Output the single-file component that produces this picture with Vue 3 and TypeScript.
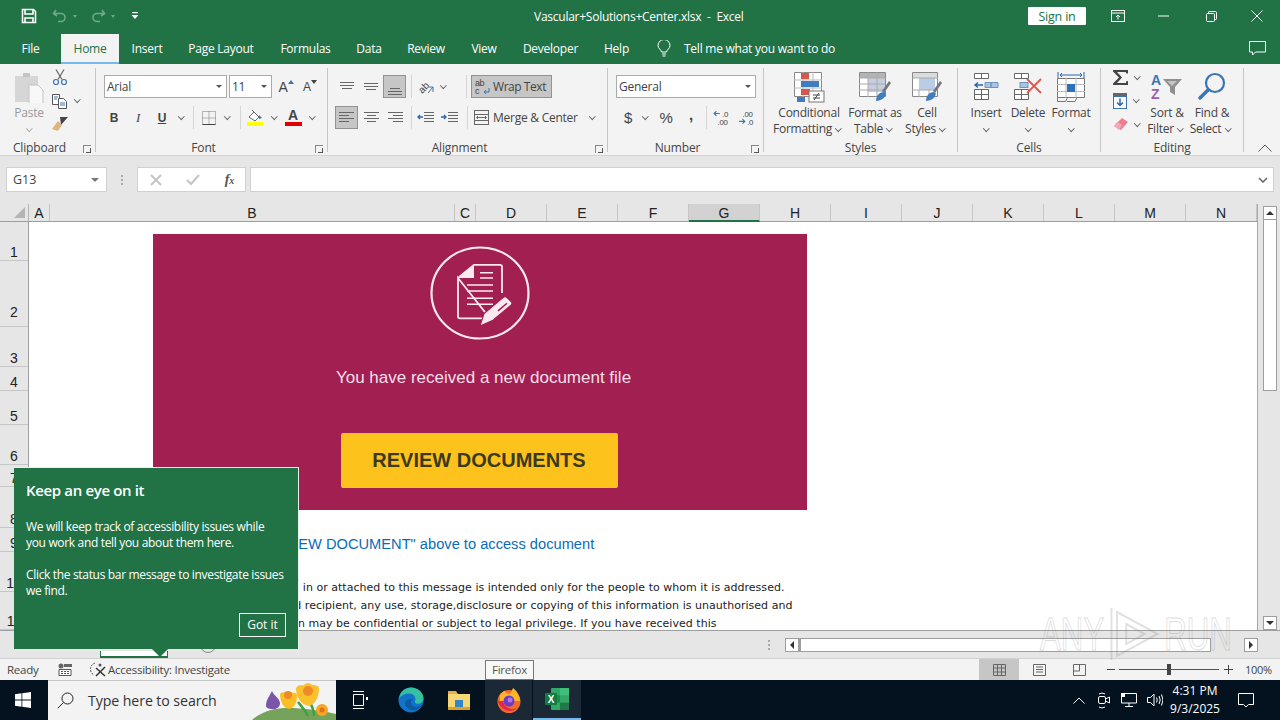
<script setup lang="ts">
const tabs = ['File', 'Home', 'Insert', 'Page Layout', 'Formulas', 'Data', 'Review', 'View', 'Developer', 'Help']
const columns = ['A', 'B', 'C', 'D', 'E', 'F', 'G', 'H', 'I', 'J', 'K', 'L', 'M', 'N']
const rows = ['1', '2', '3', '4', '5', '6', '7', '8', '9', '10', '11']
</script>

<template>
  <div class="excel">
    <header class="titlebar">
      <div class="quick">
        <svg class="q-save" width="16" height="16" viewBox="0 0 16 16" fill="none" stroke="#fff" stroke-width="1.6"><path d="M1.5 1.5h11l2 2v11h-13z"/><path d="M4 2v4h8V2M4 14.5V10h8v4.5"/></svg>
        <svg class="q-undo" width="16" height="14" viewBox="0 0 16 14" fill="none" stroke="#6fa98a" stroke-width="1.6"><path d="M4 1 1.5 4.5 5 7M2 4.5h7a4 4 0 0 1 0 8H6"/></svg>
        <span class="q-caret"></span>
        <svg class="q-redo" width="16" height="14" viewBox="0 0 16 14" fill="none" stroke="#6fa98a" stroke-width="1.6"><path d="M12 1l2.500 3.500L11 7M14 4.500H7a4 4 0 0 0 0 8h3"/></svg>
        <span class="q-caret"></span>
        <svg class="q-custom" width="8" height="8" viewBox="0 0 8 8" fill="#fff"><rect x="1" y="0" width="6" height="1.200"/><path d="M0.500 3h7L4 7z"/></svg>
      </div>
      <div class="doc-title">Vascular+Solutions+Center.xlsx&nbsp; -&nbsp; Excel</div>
      <button class="signin">Sign in</button>
      <svg class="win display" width="14" height="12" viewBox="0 0 14 12" fill="none" stroke="#fff"><rect x=".5" y=".5" width="13" height="11"/><path d="M.5 3h13M7 9.500V5M5 7l2-2 2 2"/></svg>
      <svg class="win min" width="11" height="2" viewBox="0 0 11 2" stroke="#fff"><path d="M0 1h11"/></svg>
      <svg class="win restore" width="11" height="11" viewBox="0 0 11 11" fill="none" stroke="#fff"><rect x=".5" y="2.500" width="8" height="8" rx="1"/><path d="M2.500 2.500V1.200q0-.7.700-.7h6.100q1.200 0 1.200 1.200v6.100q0 .7-.7.7H8.500"/></svg>
      <svg class="win close" width="12" height="12" viewBox="0 0 12 12" stroke="#fff"><path d="M.5.500l11 11M11.500.500l-11 11"/></svg>
    </header>

    <nav class="tabbar">
      <div v-for="t in tabs" :key="t" class="tab" :class="{ active: t === 'Home' }">{{ t }}</div>
      <svg class="bulb" width="14" height="17" viewBox="0 0 14 17" fill="none" stroke="#fff"><path d="M4.500 12c0-2-3.500-3.500-3.500-6.500a6 6 0 0 1 12 0C13 8.500 9.500 10 9.500 12zM5 14h4M5.500 16h3"/></svg>
      <div class="tellme">Tell me what you want to do</div>
      <svg class="comment" width="17" height="15" viewBox="0 0 17 15" fill="none" stroke="#fff"><path d="M.5.500h16v10.500H6.500l-3 3v-3h-3z"/></svg>
    </nav>

    <section class="ribbon">
      <!-- clipboard -->
      <div class="group g-clip">
        <div class="body clip-body">
          <div class="paste">
            <svg width="30" height="32" viewBox="0 0 30 32"><rect x="1" y="5" width="23" height="26" fill="#d6d6d6"/><path d="M9 2h7v4H9z" fill="#c4c4c4"/><path d="M15 14h9l5 5v14H15z" fill="#f8f8f8" stroke="#c4c4c4"/></svg>
            <span class="paste-label">Paste</span>
            <span class="caret pale"></span>
          </div>
          <div class="clip-tools">
            <div class="small">
              <svg width="16" height="17" viewBox="0 0 16 17" fill="none" stroke="#555" stroke-width="1.200"><path d="M4 .5l6 10M12 .5l-6 10" stroke="#666"/><circle cx="4" cy="13" r="2.500" stroke="#3c74b3"/><circle cx="12" cy="13" r="2.500" stroke="#3c74b3"/></svg>
            </div>
            <div class="small">
              <svg width="16" height="16" viewBox="0 0 16 16" fill="#fff" stroke="#555"><path d="M.5 1.500h7v10h-7z"/><path d="M6.500 5.500h5l3 3v7h-8z"/><path d="M2 4h4M2 6h3M8 10h5M8 12h5" stroke="#3c74b3"/></svg>
              <span class="caret"></span>
            </div>
            <div class="small">
              <svg width="17" height="15" viewBox="0 0 17 15"><path d="M9 0l8 0-7 8z" fill="#444" transform="translate(-1 0)"/><path d="M6 4l4 4-4 6-6-2z" fill="#dcb67a"/></svg>
            </div>
          </div>
        </div>
        <div class="label"><span>Clipboard</span><i class="launcher"></i></div>
      </div>

      <!-- font -->
      <div class="group g-font">
        <div class="body stack">
          <div class="row">
            <div class="select font-name">Arial<span class="caret dark"></span></div>
            <div class="select font-size">11<span class="caret dark"></span></div>
            <div class="ico grow"><span class="a-big">A</span><svg width="6" height="4" viewBox="0 0 6 4" fill="#3c74b3"><path d="M0 4l3-4 3 4z"/></svg></div>
            <div class="ico shrink"><span class="a-small">A</span><svg width="6" height="4" viewBox="0 0 6 4" fill="#444"><path d="M0 0l3 4 3-4z"/></svg></div>
          </div>
          <div class="row r2 font-row2">
            <div class="ico fmt b">B</div>
            <div class="ico fmt i">I</div>
            <div class="ico fmt u">U</div>
            <span class="caret"></span>
            <i class="vsep"></i>
            <div class="ico"><svg width="14" height="14" viewBox="0 0 14 14" fill="none" stroke="#777" stroke-dasharray="1 1"><path d="M.5.500h13v13H.5zM7 .5v13M.5 7h13"/><path d="M.5 13.500h13" stroke-dasharray="none" stroke="#444"/></svg></div>
            <span class="caret"></span>
            <i class="vsep"></i>
            <div class="ico">
              <svg width="18" height="17" viewBox="0 0 18 17"><path d="M3 8l5-5 5 5-4 4z" fill="#fff" stroke="#666"/><path d="M6 1l2 2" stroke="#666"/><path d="M13 6l3 3-3 1z" fill="#3c74b3"/><rect x="1" y="13" width="16" height="4" fill="#ffff00"/></svg>
            </div>
            <span class="caret"></span>
            <div class="ico font-color">
              <span>A</span>
            </div>
            <span class="caret"></span>
          </div>
        </div>
        <div class="label"><span>Font</span><i class="launcher"></i></div>
      </div>

      <!-- alignment -->
      <div class="group g-align">
        <div class="body stack">
          <div class="row">
            <div class="ico al"><svg width="14" height="10" viewBox="0 0 14 10" stroke="#666"><path d="M0 .5h14M0 3.500h14M2 6.500h10"/></svg></div>
            <div class="ico al"><svg width="14" height="10" viewBox="0 0 14 10" stroke="#666"><path d="M0 1.500h14M0 4.500h14M2 7.500h10"/></svg></div>
            <div class="ico al on"><svg class="to-bottom" width="14" height="10" viewBox="0 0 14 10" stroke="#666"><path d="M2 3.500h10M0 6.500h14M0 9.500h14"/></svg></div>
            <i class="vsep s1"></i>
            <div class="ico orient"><svg width="20" height="18" viewBox="0 0 20 18"><text x="8" y="13" transform="rotate(-45 8 10)" text-anchor="middle" font-family="Liberation Sans" font-size="10" fill="#444">ab</text><path d="M12 15l5-6" stroke="#666" fill="none"/><path d="M17 14l0-5-4 0" stroke="#3c74b3" fill="none"/></svg></div>
            <span class="caret"></span>
            <i class="vsep s2"></i>
            <div class="wrap-btn">
              <svg width="16" height="16" viewBox="0 0 16 16"><text x="0" y="7" font-family="Liberation Sans" font-size="9" fill="#444">ab</text><text x="0" y="15" font-family="Liberation Sans" font-size="9" fill="#444">c</text><path d="M14 9v4H9M11 11l-2 2 2 2" fill="none" stroke="#3c74b3"/></svg>
              <span>Wrap Text</span>
            </div>
          </div>
          <div class="row r2">
            <div class="ico al on"><svg width="15" height="11" viewBox="0 0 15 11" stroke="#666"><path d="M0 .5h15M0 3.500h10M0 6.500h15M0 9.500h10"/></svg></div>
            <div class="ico al"><svg width="15" height="11" viewBox="0 0 15 11" stroke="#666"><path d="M0 .5h15M3 3.500h9M0 6.500h15M3 9.500h9"/></svg></div>
            <div class="ico al"><svg width="15" height="11" viewBox="0 0 15 11" stroke="#666"><path d="M0 .5h15M5 3.500h10M0 6.500h15M5 9.500h10"/></svg></div>
            <i class="vsep s1"></i>
            <div class="ico ind"><svg width="17" height="11" viewBox="0 0 17 11" fill="none"><path d="M7 .5h10M7 3.500h10M7 6.500h10M7 9.500h10" stroke="#666"/><path d="M6 5H1M3 3L1 5l2 2" stroke="#2a66b0" stroke-width="1.300"/></svg></div>
            <div class="ico ind2"><svg width="17" height="11" viewBox="0 0 17 11" fill="none"><path d="M7 .5h10M7 3.500h10M7 6.500h10M7 9.500h10" stroke="#666"/><path d="M0 5h5M3 3l2 2-2 2" stroke="#2a66b0" stroke-width="1.300"/></svg></div>
            <i class="vsep s3"></i>
            <div class="merge">
              <svg width="15" height="15" viewBox="0 0 15 15" fill="none" stroke="#666"><rect x=".5" y=".5" width="14" height="14"/><path d="M.5 4.500h14M.5 10.500h14"/><path d="M2.500 7.500h10M4 6l-1.500 1.500L4 9M11 6l1.500 1.500L11 9" stroke="#3c74b3"/></svg>
              <span>Merge &amp; Center</span>
              <span class="caret"></span>
            </div>
          </div>
        </div>
        <div class="label"><span>Alignment</span><i class="launcher"></i></div>
      </div>

      <!-- number -->
      <div class="group g-num">
        <div class="body stack">
          <div class="row">
            <div class="select num-format">General<span class="caret dark"></span></div>
          </div>
          <div class="row r2 num-row2">
            <div class="ico sym">$</div>
            <span class="caret"></span>
            <div class="ico sym pct">%</div>
            <div class="ico sym comma">,</div>
            <i class="vsep"></i>
            <div class="ico dec"><svg width="18" height="16" viewBox="0 0 16 14"><path d="M6 3H1M3 1L1 3l2 2" fill="none" stroke="#3c74b3"/><text x="8" y="6" font-family="Liberation Sans" font-size="7" fill="#444">.0</text><text x="4" y="13" font-family="Liberation Sans" font-size="7" fill="#444">.00</text></svg></div>
            <div class="ico dec"><svg width="18" height="16" viewBox="0 0 16 14"><text x="4" y="6" font-family="Liberation Sans" font-size="7" fill="#444">.00</text><path d="M1 10h5M4 8l2 2-2 2" fill="none" stroke="#3c74b3"/><text x="8" y="13" font-family="Liberation Sans" font-size="7" fill="#444">.0</text></svg></div>
          </div>
        </div>
        <div class="label"><span>Number</span><i class="launcher"></i></div>
      </div>

      <!-- styles -->
      <div class="group g-styles">
        <div class="body bigs">
          <div class="big w78">
            <svg width="32" height="32" viewBox="0 0 32 32"><path d="M1.500 1.500h27v24h-27z" fill="#fff" stroke="#888"/><path d="M1 9h28M1 17h28M10 1v25M20 1v25" stroke="#bbb"/><rect x="8" y="2" width="8" height="6" fill="#d9574a"/><rect x="8" y="10" width="18" height="6" fill="#3f7cc0"/><rect x="8" y="18" width="9" height="6" fill="#d9574a"/><rect x="4" y="26" width="8" height="5" fill="#3f7cc0"/><rect x="16" y="20" width="15" height="11" fill="#fff" stroke="#777"/><path d="M20 24h7M20 27h7M26 22l-5 7" stroke="#444" fill="none"/></svg>
            <span>Conditional</span>
            <span class="line2">Formatting<i class="caret tight"></i></span>
          </div>
          <div class="big w54">
            <svg width="34" height="32" viewBox="0 0 34 32"><path d="M1.500 1.500h26v24h-26z" fill="#fff" stroke="#888"/><rect x="2" y="2" width="25" height="5" fill="#b4b4b4"/><rect x="10" y="7" width="17" height="14" fill="#c4cede"/><path d="M1 7h27M1 13h27M1 19h27M10 1v25M19 1v25" stroke="#aaa"/><path d="M24 20l7-10 2 2-7 10z" fill="#777"/><path d="M18 30c0-6 4-9 8-9s1 9-8 9z" fill="#3f7cc0"/></svg>
            <span>Format as</span>
            <span class="line2">Table<i class="caret tight"></i></span>
          </div>
          <div class="big w50">
            <svg width="32" height="32" viewBox="0 0 32 32"><path d="M1.500 1.500h25v24h-25z" fill="#fff" stroke="#888"/><rect x="2" y="2" width="24" height="5" fill="#dcdcdc"/><rect x="8" y="7" width="16" height="12" fill="#b9cde6"/><path d="M1 7h26M1 19h26M8 19v7M18 19v7" stroke="#aaa"/><path d="M22 20l7-10 2 2-7 10z" fill="#777"/><path d="M15 30c0-6 4-9 8-9s1 9-8 9z" fill="#3f7cc0"/></svg>
            <span>Cell</span>
            <span class="line2">Styles<i class="caret tight"></i></span>
          </div>
        </div>
        <div class="label"><span>Styles</span></div>
      </div>

      <!-- cells -->
      <div class="group g-cells">
        <div class="body bigs">
          <div class="big w42">
            <svg width="28" height="30" viewBox="0 0 28 30" fill="#fff" stroke="#666"><path d="M2.500 1.500h14v5h-14zM9.500 1.500v5M2.500 17.500h14v10h-14zM2.500 22.500h14M9.500 17.500v10"/><path d="M13 10.500h6v5h-6zM19 10.500h7v5h-7z" fill="#a9c4e2" stroke="#7193bb"/><path d="M11 13H3M6 10.500 3 13l3 2.500" fill="none" stroke="#2a66b0" stroke-width="1.400"/></svg>
            <span>Insert</span>
            <span class="caret solo"></span>
          </div>
          <div class="big w42">
            <svg width="32" height="30" viewBox="0 0 32 30" fill="#fff" stroke="#666"><path d="M2.500 1.500h14v5h-14zM9.500 1.500v5M2.500 17.500h14v10h-14zM2.500 22.500h14M9.500 17.500v10"/><rect x="8" y="10.500" width="8" height="5" fill="#a9c4e2" stroke="#7193bb"/><path d="M15 7l14 14M29 7L15 21" stroke="#e2574c" stroke-width="1.800"/></svg>
            <span>Delete</span>
            <span class="caret solo"></span>
          </div>
          <div class="big w44">
            <svg width="30" height="32" viewBox="0 0 30 32" fill="none" stroke="#777"><path d="M2 1v6M28 1v6M4 4h22M4 4l2-2M4 4l2 2M26 4l-2-2M26 4l-2 2" stroke="#2a66b0"/><path d="M1.500 7.500h27v19h-27z" fill="#fff"/><path d="M1 13.500h28M1 20.500h28M10 7v20M20 7v20" stroke="#bbb"/><rect x="11" y="13" width="8" height="8" fill="#2f6fb7" stroke="none"/><path d="M1.500 26.500v4h8l2-4M11 30.500h8l2-4"/></svg>
            <span>Format</span>
            <span class="caret solo"></span>
          </div>
        </div>
        <div class="label"><span>Cells</span></div>
      </div>

      <!-- editing -->
      <div class="group g-edit">
        <div class="body bigs">
          <div class="edit-tools">
            <div class="small">
              <svg width="15" height="15" viewBox="0 0 15 15"><path d="M0 0h15v3.500h-1.500L12.500 2H4l5 5.500L4 13h9l.5-2H15v4H0v-1.500L6 7.500 0 1.500z" fill="#444"/></svg>
              <span class="caret"></span>
            </div>
            <div class="small">
              <svg width="14" height="16" viewBox="0 0 14 16"><rect width="14" height="3.500" fill="#666"/><rect x=".5" y="3.500" width="13" height="12" fill="#fff" stroke="#3c74b3"/><path d="M7 5.500v7M4 9.500l3 3 3-3" fill="none" stroke="#2a66b0" stroke-width="1.500"/></svg>
              <span class="caret"></span>
            </div>
            <div class="small">
              <svg width="15" height="12" viewBox="0 0 15 12"><path d="M9 0l6 4-7 8-7-4z" fill="#ef7c8e"/><path d="M1 8l3-4 5 3-3 5z" fill="#f3a9b5"/></svg>
              <span class="caret"></span>
            </div>
          </div>
          <div class="big w46">
            <svg width="32" height="30" viewBox="0 0 32 30"><text x="0" y="13" font-family="Liberation Sans" font-size="14" font-weight="700" fill="#3c74b3">A</text><text x="0" y="27" font-family="Liberation Sans" font-size="14" font-weight="700" fill="#9c5eb0">Z</text><path d="M12 7h19l-7 8v8l-5-3v-5z" fill="#8f8f8f"/><path d="M16 9h10l-5 5z" fill="#c4c4c4"/></svg>
            <span>Sort &amp;</span>
            <span class="line2">Filter<i class="caret tight"></i></span>
          </div>
          <div class="big w44b">
            <svg width="30" height="30" viewBox="0 0 30 30" fill="none"><circle cx="18" cy="11" r="9" stroke="#3c74b3" stroke-width="2.200"/><path d="M11 18l-8 8" stroke="#3c74b3" stroke-width="3.500" stroke-linecap="round"/></svg>
            <span>Find &amp;</span>
            <span class="line2">Select<i class="caret tight"></i></span>
          </div>
        </div>
        <div class="label"><span>Editing</span></div>
      </div>

      <svg class="collapse" width="14" height="8" viewBox="0 0 14 8" fill="none" stroke="#555"><path d="M.5 7.500 7 1l6.500 6.500"/></svg>
    </section>

    <section class="formula">
      <div class="namebox">G13<i class="tri"></i></div>
      <div class="fdots"><i></i><i></i><i></i></div>
      <div class="fxbox">
        <svg width="12" height="12" viewBox="0 0 12 12" stroke="#c4c4c4" stroke-width="2"><path d="M1 1l10 10M11 1L1 11"/></svg>
        <svg width="14" height="12" viewBox="0 0 14 12" fill="none" stroke="#c4c4c4" stroke-width="2"><path d="M1 6l4 4 8-9"/></svg>
        <span class="fx">f<small>x</small></span>
      </div>
      <div class="finput">
        <svg width="10" height="6" viewBox="0 0 10 6" fill="none" stroke="#666" stroke-width="1.500"><path d="M1 1l4 4 4-4"/></svg>
      </div>
    </section>

    <section class="sheet">
      <div class="grid-side">
        <div class="colhead">
          <div class="corner"><i></i></div>
          <div v-for="c in columns" :key="c" class="col" :class="['col-' + c, { sel: c === 'G' }]">{{ c }}</div>
        </div>
        <div class="gridbody">
          <div class="rowhead">
            <div v-for="r in rows" :key="r" class="rownum">{{ r }}</div>
          </div>
          <div class="cells">
            <div class="access-line">Click "REVIEW DOCUMENT" above to access document</div>
            <div class="notice">
              <div class="n1">The information contained in or attached to this message is intended only for the people to whom it is addressed.</div>
              <div class="n2">If you are not the intended recipient, any use, storage,disclosure or copying of this information is unauthorised and</div>
              <div class="n3">This information may be confidential or subject to legal privilege. If you have received this</div>
            </div>
            <div class="banner">
              <svg class="doc-icon" width="100" height="94" viewBox="0 0 100 100" preserveAspectRatio="none" fill="none" stroke="#fbe9f0">
                <circle cx="50" cy="50" r="48.500" stroke-width="2.200"/>
                <path d="M28 34 44 20H70q2 0 2 2V50M60 77H30q-2 0-2-2V34z" stroke-width="1.800"/>
                <path d="M28 34H44V20z" fill="#fbe9f0" stroke="none"/>
                <path d="M50 28.500H63M50 34H63M37 41.500H63M37 48H63M37 55.500H63M37 62H63" stroke-width="1.600"/>
                <path d="M50 85l4-13 19-17q2-2 4 0l4 4q2 2 0 4L63 79z" fill="#fbe9f0" stroke="#a21f52" stroke-width="1.200"/>
                <path d="M68 69l9-8" stroke="#a21f52" stroke-width="1.500"/>
              </svg>
              <div class="banner-text">You have received a new document file</div>
              <div class="review">REVIEW DOCUMENTS</div>
            </div>
          </div>
        </div>
      </div>
      <div class="vscroll">
        <button class="sb-btn"><i class="up"></i></button>
        <div class="v-thumb"></div>
        <div class="v-rest"></div>
        <button class="sb-btn"><i class="down"></i></button>
      </div>
    </section>

    <section class="sheetbar">
      <div class="sheet-tab"></div>
      <div class="add-sheet"></div>
      <div class="hsdots"><i></i><i></i><i></i></div>
      <div class="hscroll">
        <button class="sb-btn h"><i class="left"></i></button>
        <div class="h-thumb"></div>
        <div class="h-rest"></div>
        <button class="sb-btn h"><i class="right"></i></button>
      </div>
    </section>

    <footer class="status">
      <span class="ready">Ready</span>
      <svg class="macro" width="14" height="13" viewBox="0 0 14 13"><circle cx="3" cy="3" r="2.500" fill="#666"/><path d="M6 1h8v3H6z" fill="#666"/><path d="M1 6.500h12v6H1z" fill="#fff" stroke="#555"/><path d="M3 8.500h2M6 8.500h2M9 8.500h2M3 10.500h2M6 10.500h2M9 10.500h2" stroke="#555"/></svg>
      <svg class="a11y" width="17" height="15" viewBox="0 0 17 15" fill="none" stroke="#555"><path d="M6 1a6.500 6.500 0 0 0-1 12" stroke-dasharray="2 1"/><path d="M7 6l9 8M16 5l-9 9" stroke="#333" stroke-width="1.500"/><circle cx="11" cy="3" r="1.500" fill="#555" stroke="none"/></svg>
      <span class="a11y-text">Accessibility: Investigate</span>
      <div class="viewbtns">
        <div class="vbtn on"><svg width="13" height="12" viewBox="0 0 13 12" fill="none" stroke="#666"><path d="M.5.500h12v11H.5zM.5 4h12M.5 8h12M4.500 0v12M8.500 0v12"/></svg></div>
        <div class="vbtn"><svg width="13" height="12" viewBox="0 0 13 12" fill="none" stroke="#666"><path d="M.5.500h12v11H.5zM3 3h7M3 5.500h7M3 8h7"/></svg></div>
        <div class="vbtn"><svg width="13" height="12" viewBox="0 0 13 12" fill="none" stroke="#666"><path d="M.5.500h12v11H.5zM.5 7h6V.5"/></svg></div>
      </div>
      <div class="zoomer">
        <span class="z-minus"></span>
        <div class="z-track"><i></i></div>
        <span class="z-plus"></span>
      </div>
      <span class="zoom-val">100%</span>
    </footer>

    <footer class="taskbar">
      <div class="start">
        <svg width="16" height="16" viewBox="0 0 16 16" fill="#fff"><path d="M0 2.200 6.500 1.300v6.300H0zM7.300 1.200 16 0v7.600H7.300zM0 8.400h6.500v6.300L0 13.800zM7.300 8.400H16V16l-8.700-1.200z"/></svg>
      </div>
      <div class="search">
        <svg width="17" height="17" viewBox="0 0 17 17" fill="none" stroke="#222"><circle cx="10.500" cy="6.500" r="5.500"/><path d="M6.500 10.500.8 16.200"/></svg>
        <span>Type here to search</span>
        <svg class="flowers" width="84" height="40" viewBox="0 0 84 40">
          <path d="M0 40c10-9 26-13 42-12s34 4 42 6v6z" fill="#76a35c"/>
          <path d="M62 36c0-8-3-12-6-17M56 36c-3-6-6-9-10-14" stroke="#3fa142" stroke-width="2.500" fill="none"/>
          <path d="M14 26c0-6 3-9 6-15 2 5 7 6 8 12 0 5-5 7-8 6-3 0-6-1-6-3z" fill="#7a55a8"/>
          <path d="M28 14c3-3 5 0 7-2 2 1 4-1 6 1 3-1 4 1 4 3 0 7-3 12-8 13-6-1-9-8-9-15z" fill="#fbbf24"/>
          <circle cx="36" cy="15" r="4" fill="#f08a24"/>
          <path d="M44 8c2-4 5-2 8-3 3-3 6-2 8 0 3 0 6 0 7 3 0 8-3 16-10 18-8-1-13-9-13-18z" fill="#fbc02d"/>
          <circle cx="56" cy="11" r="5" fill="#f08a24"/>
          <circle cx="70" cy="30" r="6" fill="#f5a623"/><circle cx="70" cy="30" r="2.500" fill="#e0701c"/>
        </svg>
      </div>
      <div class="tb-app taskview">
        <svg width="16" height="18" viewBox="0 0 16 18" fill="none" stroke="#fff"><path d="M1 .5h11M1 17.500h11M1.500 3.500h10v11h-10z"/><rect x="14" y="6" width="2" height="3" fill="#fff" stroke="none"/></svg>
      </div>
      <div class="tb-app edge">
        <svg width="26" height="26" viewBox="0 0 26 26"><circle cx="13" cy="13" r="12.500" fill="#1173c9"/><path d="M1 12C2 4 8 .5 13 .5c7 0 12.500 5 12.500 11 0 4-4 6-7 5-2-.5-2-2-1-4 0-4-3-6-6.500-6C6 6.500 2 9 1 12z" fill="#35c1a0"/><path d="M7 16c0 5 6 8 11 7 2-.5 5-3 6-5-5 3-9 2-10 0-2-2-1-4 1-6-4 0-8 1-8 4z" fill="#0c59a4"/></svg>
      </div>
      <div class="tb-app explorer">
        <svg width="24" height="22" viewBox="0 0 24 22"><path d="M1 2h8l2 3h12v3H1z" fill="#e3b23c"/><rect x="1" y="5" width="22" height="16" fill="#f7d774"/><rect x="8" y="11" width="8" height="7" fill="#2f86c9"/><rect x="1" y="18" width="22" height="3" fill="#d9a22c"/></svg>
      </div>
      <div class="tb-app firefox lit">
        <svg width="24" height="26" viewBox="0 0 24 26"><circle cx="12" cy="14.500" r="11.500" fill="#f36b2b"/><path d="M3 8c2-2 3-4 5-4 0 2 3 2 4 3 2-1 3-4 4-6 4 3 7 8 7 13H3z" fill="#fcb42b"/><path d="M1 14c2 9 13 13 19 7-5 3-13 0-14-7z" fill="#e3254f"/><circle cx="12" cy="14" r="5.500" fill="#6e3bc5"/><circle cx="13" cy="13" r="2.500" fill="#b272dc"/></svg>
      </div>
      <div class="tb-app excel-app lit active">
        <svg width="24" height="22" viewBox="0 0 24 22"><rect x="6" y="0" width="18" height="22" rx="1" fill="#33a866"/><rect x="15" y="0" width="9" height="7.300" fill="#3fc07a"/><rect x="15" y="14.700" width="9" height="7.300" fill="#1f7a48"/><rect x="6" y="7.300" width="9" height="7.400" fill="#1f8a50"/><rect x="0" y="5" width="12" height="12" rx="1" fill="#107c41"/><text x="6" y="14.500" text-anchor="middle" font-family="Liberation Sans" font-size="10" font-weight="700" fill="#fff">X</text></svg>
      </div>
      <div class="tray">
        <svg width="12" height="7" viewBox="0 0 12 7" fill="none" stroke="#fff"><path d="M.5 6.500 6 1l5.500 5.500"/></svg>
        <svg class="t-meet" width="14" height="17" viewBox="0 0 14 17" fill="none" stroke="#fff"><rect x="1.500" y="4.500" width="7" height="7" rx="1.500"/><path d="M8.500 7l4-2v6l-4-2M2 2q3-2 6 0M2 15q3 2 6 0"/></svg>
        <svg class="t-net" width="16" height="14" viewBox="0 0 16 14" fill="none" stroke="#fff"><path d="M.5 .5h15v9.500h-15zM8 10v3M4 13.500h8"/><rect x="0" y="0" width="4" height="4" fill="#fff" stroke="none"/></svg>
        <svg class="t-vol" width="16" height="14" viewBox="0 0 16 14" fill="none" stroke="#fff"><path d="M.5 4.500h3l3.500-3.500v12l-3.500-3.500h-3zM9.500 4.500q1.500 2.500 0 5M12 3q2.500 4 0 8M14.500 1.500q3 5.500 0 11"/></svg>
      </div>
      <div class="clock"><span>4:31 PM</span><span>9/3/2025</span></div>
      <svg class="notif" width="16" height="15" viewBox="0 0 16 15" fill="none" stroke="#fff"><path d="M.5.500h15v11h-5l-2.500 2.500-2.500-2.500h-5z"/></svg>
    </footer>

    <!-- teaching callout over the sheet -->
    <aside class="callout">
      <h3>Keep an eye on it</h3>
      <p>We will keep track of accessibility issues while you work and tell you about them here.</p>
      <p>Click the status bar message to investigate issues we find.</p>
      <button class="gotit">Got it</button>
      <i class="pointer"></i>
    </aside>

    <div class="tb-tip">Firefox</div>

    <div class="watermark">
      <span>ANY</span>
      <svg width="84" height="56" viewBox="0 0 62 56" preserveAspectRatio="none" fill="none" stroke="#888" stroke-width="2"><path d="M6 2v52M12 6l44 22-44 22z"/><path d="M22 18l20 10-20 10z"/></svg>
      <span>RUN</span>
    </div>
  </div>
</template>

<style>
html, body {
  margin: 0;
  padding: 0;
  background: #fff;
}
</style>

<style scoped>
.excel {
  position: relative;
  width: 1280px;
  height: 720px;
  overflow: hidden;
  display: flex;
  flex-direction: column;
  background: #e6e6e6;
  font-family: "Open Sans", "Noto Sans", "Liberation Sans", sans-serif;
  font-size: 12px;
  letter-spacing: -0.25px;
  color: #444;
}

/* ---- title bar ---- */
.titlebar {
  height: 32px;
  flex-shrink: 0;
  background: #217346;
  display: flex;
  align-items: center;
  color: #fff;
  position: relative;
}
.quick {
  width: 500px;
  display: flex;
  align-items: center;
  padding-left: 21px;
  box-sizing: border-box;
}
.q-undo { margin-left: 15px; }
.q-redo { margin-left: 13px; }
.q-custom { margin-left: 16px; }
.q-caret {
  width: 0;
  height: 0;
  margin-left: 5px;
  border-left: 2.5px solid transparent;
  border-right: 2.5px solid transparent;
  border-top: 3px solid #6fa98a;
}
.doc-title {
  margin-left: 34px;
  width: 494px;
  padding-top: 1px;
  font-size: 12px;
  white-space: nowrap;
}
.signin {
  width: 58px;
  height: 18px;
  padding: 0;
  border: none;
  border-radius: 1px;
  background: #fff;
  color: #217346;
  font: inherit;
  font-size: 12.5px;
  letter-spacing: -0.2px;
}
.win { flex-shrink: 0; }
.display { margin-left: 25px; }
.min { margin-left: 33px; }
.restore { margin-left: 37px; }
.close { margin-left: 34px; }

/* ---- tabs ---- */
.tabbar {
  height: 32px;
  flex-shrink: 0;
  background: #217346;
  display: grid;
  grid-template-columns: 61px 58px 56px 92px 77px 50px 64px 52px 81px 51px 42px auto 1fr;
  align-items: stretch;
  color: #fff;
}
.tab {
  display: flex;
  align-items: center;
  justify-content: center;
  font-size: 12px;
  padding-top: 1px;
  box-sizing: border-box;
}
.tab.active {
  margin-top: 2px;
  background: #f3f3f3;
  color: #217346;
}
.bulb { align-self: center; justify-self: end; margin-right: 13px; }
.tellme {
  align-self: center;
  font-size: 12px;
}
.comment { align-self: center; justify-self: end; margin-right: 14px; }

/* ---- ribbon ---- */
.ribbon {
  position: relative;
  height: 92px;
  flex-shrink: 0;
  box-sizing: border-box;
  background: #f3f3f3;
  border-bottom: 1px solid #d2d2d2;
  padding-top: 4px;
  display: flex;
}
.group {
  height: 84px;
  box-sizing: border-box;
  border-right: 1px solid #c6c6c6;
  display: flex;
  flex-direction: column;
}
.g-clip { width: 96px; }
.g-font { width: 232px; }
.g-align { width: 280px; }
.g-num { width: 156px; }
.g-styles { width: 194px; }
.g-cells { width: 143px; }
.g-edit { width: 143px; }
.body { height: 71px; flex-shrink: 0; }
.label {
  flex: 1;
  display: flex;
  align-items: center;
  font-size: 12px;
  color: #444;
  letter-spacing: -0.15px;
  white-space: nowrap;
}
.label span { flex: 1; text-align: center; }
.launcher {
  width: 8px;
  height: 8px;
  margin: 2px 4px 0 4px;
  border-left: 1px solid #888;
  border-top: 1px solid #888;
  position: relative;
  box-sizing: border-box;
}
.launcher::after {
  content: "";
  position: absolute;
  right: 0;
  bottom: 0;
  width: 4px;
  height: 4px;
  border-right: 1px solid #555;
  border-bottom: 1px solid #555;
}
.caret {
  display: inline-flex;
  align-items: center;
  justify-content: center;
  width: 14px;
  height: 10px;
  flex-shrink: 0;
}
.caret::before {
  content: "";
  width: 3.5px;
  height: 3.5px;
  margin-top: -2px;
  border-right: 1px solid #666;
  border-bottom: 1px solid #666;
  transform: rotate(45deg);
}
.caret.pale::before { border-color: #aaa; }
.caret.dark::before {
  width: 0;
  height: 0;
  border: 3px solid transparent;
  border-top: 3px solid #555;
  border-bottom: none;
  transform: none;
  margin-top: 0;
}
.caret.tight { width: 13px; font-style: normal; }
.clip-body { display: flex; padding-left: 14px; box-sizing: border-box; }
.paste {
  width: 30px;
  display: flex;
  flex-direction: column;
  align-items: center;
  padding-top: 3px;
}
.paste-label { color: #9a9a9a; line-height: 16px; margin-top: 2px; }
.paste .caret { margin-top: 3px; }
.clip-tools, .edit-tools {
  display: flex;
  flex-direction: column;
  gap: 5.5px;
}
.clip-tools { margin-left: 8px; }
.small {
  height: 18px;
  width: 38px;
  display: flex;
  align-items: center;
}
.small svg { flex-shrink: 0; }
.small .caret { margin-left: 2px; }
.stack { padding-top: 7px; box-sizing: border-box; }
.row { height: 23px; display: flex; align-items: center; }
.r2 { margin-top: 8px; }
.ico {
  width: 24px;
  height: 23px;
  flex-shrink: 0;
  box-sizing: border-box;
  display: flex;
  align-items: center;
  justify-content: center;
  position: relative;
}
.vsep {
  width: 1px;
  height: 23px;
  flex-shrink: 0;
  background: #d6d6d6;
}
.select {
  height: 23px;
  box-sizing: border-box;
  background: #fff;
  border: 1px solid #ababab;
  display: flex;
  align-items: center;
  justify-content: space-between;
  padding-left: 2px;
  font-size: 12px;
  flex-shrink: 0;
}
.g-font .stack { padding-left: 8px; }
.font-name { width: 123px; }
.font-size { width: 43px; margin-left: 2px; }
.grow { margin-left: 2px; }
.a-big { font: 14px "Liberation Sans", sans-serif; color: #444; }
.a-small { font: 12px "Liberation Sans", sans-serif; color: #444; }
.grow svg, .shrink svg { margin-bottom: 9px; }
.font-row2 { margin-left: -2px; }
.font-row2 .vsep { margin: 0 2.500px 0 5px; }
.fmt { font: 700 12px "Liberation Sans", sans-serif; color: #444; }
.fmt.i { font-style: italic; font-weight: 400; font-family: "Liberation Serif", serif; font-size: 13px; }
.fmt.u { text-decoration: underline; }
.font-color span {
  width: 17px;
  height: 17px;
  box-sizing: border-box;
  border-bottom: 4px solid #e00000;
  text-align: center;
  font: 700 14px/13px "Liberation Sans", sans-serif;
  color: #444;
}
.g-align .stack { padding-left: 7px; }
.al { width: 24px; }
.al.on {
  background: #c6c6c6;
  border: 1px solid #929292;
  width: 23px;
  margin-right: 1px;
}
.to-bottom { margin-top: 6px; }
.s1 { margin: 0 4px; }
.s2 { margin: 0 4px 0 16px; }
.s3 { margin: 0 3px 0 6px; }
.orient { width: 20px; }
.wrap-btn {
  width: 81px;
  height: 23px;
  box-sizing: border-box;
  background: #c6c6c6;
  border: 1px solid #929292;
  display: flex;
  align-items: center;
  gap: 2px;
  padding-left: 3px;
  font-size: 12px;
  letter-spacing: -0.45px;
  white-space: nowrap;
}
.ind { width: 24px; margin-left: -3px; }
.ind2 { width: 24px; }
.merge {
  display: flex;
  align-items: center;
  padding-left: 3px;
  font-size: 12px;
  white-space: nowrap;
}
.merge span:first-of-type { margin-left: 4px; width: 88px; }
.merge .caret { margin-left: 4px; }
.g-num .stack { padding-left: 8px; }
.num-format { width: 140px; }
.sym { font: 15px "Liberation Sans", sans-serif; color: #444; width: 24px; }
.num-row2 .caret { margin: 0 -2px 0 -2px; }
.pct { margin-left: 3px; width: 26px; }
.comma { font-weight: 700; margin-bottom: 6px; }
.num-row2 .vsep { margin: 0 2px 0 3px; }
.dec { width: 25px; }
.bigs { display: flex; padding-top: 3px; box-sizing: border-box; }
.g-styles .bigs { padding-left: 6px; }
.g-cells .bigs { padding-left: 7px; }
.g-edit .bigs { padding-left: 6px; }
.big {
  display: flex;
  flex-direction: column;
  align-items: center;
  flex-shrink: 0;
  line-height: 16px;
  white-space: nowrap;
  font-size: 12px;
}
.big svg { height: 32px; margin-bottom: 2px; flex-shrink: 0; }
.line2 { display: flex; align-items: center; }
.solo { height: 16px; }
.w78 { width: 78px; }
.w54 { width: 54px; }
.w50 { width: 50px; }
.w42 { width: 42px; }
.w44 { width: 44px; }
.w46 { width: 46px; }
.w44b { width: 44px; }
.edit-tools { width: 37px; margin-top: -3px; padding-left: 6px; box-sizing: border-box; }
.edit-tools .small { width: 31px; }
.collapse { position: absolute; left: 1258px; top: 80px; }

/* ---- formula bar ---- */
.formula {
  height: 48px;
  flex-shrink: 0;
  box-sizing: border-box;
  padding: 11px 6px 12px;
  display: flex;
  align-items: stretch;
}
.namebox, .fxbox, .finput {
  background: #fff;
  border: 1px solid #d0d0d0;
  box-sizing: border-box;
  display: flex;
  align-items: center;
}
.namebox {
  width: 101px;
  padding: 0 6px;
  justify-content: space-between;
  font-size: 12.500px;
  letter-spacing: 0;
}
.tri {
  width: 0;
  height: 0;
  margin-right: 1px;
  border-left: 4px solid transparent;
  border-right: 4px solid transparent;
  border-top: 4px solid #777;
}
.fdots {
  width: 30px;
  display: flex;
  flex-direction: column;
  align-items: center;
  justify-content: center;
  gap: 2px;
}
.fdots i, .hsdots i { width: 2px; height: 2px; background: #aaa; }
.fxbox {
  width: 109px;
  justify-content: space-between;
  padding: 0 11px 0 12px;
}
.fx {
  font: italic 700 14px "Liberation Serif", serif;
  color: #555;
}
.fx small { font-size: 10px; }
.finput {
  flex: 1;
  margin-left: 4px;
  justify-content: flex-end;
  padding-right: 5px;
}

/* ---- sheet ---- */
.sheet {
  height: 426px;
  flex-shrink: 0;
  display: flex;
}
.grid-side {
  width: 1258px;
  display: flex;
  flex-direction: column;
  border-right: 1px solid #a8a8a8;
  box-sizing: border-box;
}
.colhead {
  height: 17px;
  flex-shrink: 0;
  display: flex;
  box-sizing: content-box;
  border-bottom: 1px solid #9e9e9e;
  font: 14px "Liberation Sans", sans-serif;
  letter-spacing: 0;
  color: #222;
}
.corner {
  width: 29px;
  box-sizing: border-box;
  border-right: 1px solid #b4b4b4;
  display: flex;
  justify-content: flex-end;
  align-items: flex-end;
  padding: 0 3px 3px 0;
}
.corner i {
  width: 0;
  height: 0;
  border-left: 11px solid transparent;
  border-bottom: 11px solid #b4b4b4;
}
.col {
  width: 71px;
  flex-shrink: 0;
  box-sizing: border-box;
  border-right: 1px solid #c6c6c6;
  text-align: center;
  line-height: 18px;
}
.col-A, .col-C { width: 21px; }
.col-B { width: 405px; }
.col.sel {
  background: #d2d2d2;
  border-bottom: 2px solid #217346;
  height: 18px;
}
.gridbody {
  flex: 1;
  display: flex;
  min-height: 0;
}
.rowhead {
  width: 29px;
  flex-shrink: 0;
  box-sizing: border-box;
  border-right: 1px solid #9e9e9e;
  display: grid;
  grid-template-rows: 39px 66px 40px 24px 34px 40px 22px 41px 24px 40px 38px;
  font: 14px "Liberation Sans", sans-serif;
  letter-spacing: 0;
  color: #222;
}
.rownum {
  box-sizing: border-box;
  border-bottom: 1px solid #c6c6c6;
  display: flex;
  align-items: flex-end;
  justify-content: center;
}
.rownum:nth-child(2) { padding-bottom: 6px; }
.cells {
  flex: 1;
  background: #fff;
  position: relative;
  overflow: hidden;
  display: grid;
  grid-template-rows: 39px 66px 40px 24px 34px 40px 22px 41px 24px 78px;
}
.access-line {
  grid-row: 9;
  align-self: center;
  padding: 8px 0 0 194px;
  font: 14.670px "Liberation Sans", sans-serif;
  letter-spacing: 0;
  color: #0b6cb5;
  white-space: nowrap;
}
.notice {
  grid-row: 10;
  padding-top: 27px;
  padding-left: 124px;
  font: 11px/18px "DejaVu Sans", sans-serif;
  letter-spacing: 0.03px;
  color: #222;
  white-space: nowrap;
}
.n3 { padding-left: 62px; }
.banner {
  position: absolute;
  left: 124px;
  top: 12px;
  width: 654px;
  height: 276px;
  background: #a21f52;
  display: flex;
  flex-direction: column;
  align-items: center;
  padding-top: 12px;
  box-sizing: border-box;
}
.banner-text {
  margin: 28px 0 0 7px;
  font: 17px "Liberation Sans", sans-serif;
  letter-spacing: 0;
  color: #f5dfe8;
}
.review {
  margin: 45px 2px 0 0;
  width: 277px;
  height: 55px;
  border-radius: 2px;
  background: #fec21d;
  color: #3b3a1f;
  font: 700 20px/55px "Liberation Sans", sans-serif;
  letter-spacing: 0;
  text-align: center;
}

/* ---- scrollbars ---- */
.vscroll {
  flex: 1;
  display: flex;
  flex-direction: column;
  padding: 2px 3px 0 5px;
  box-sizing: border-box;
}
.sb-btn {
  width: 14px;
  height: 14px;
  padding: 0;
  flex-shrink: 0;
  background: #fff;
  border: 1px solid #9e9e9e;
  display: flex;
  align-items: center;
  justify-content: center;
}
.up, .down, .left, .right { width: 0; height: 0; display: block; }
.up { border: 4px solid transparent; border-top: none; border-bottom: 4px solid #333; }
.down { border: 4px solid transparent; border-bottom: none; border-top: 4px solid #333; }
.left { border: 4px solid transparent; border-left: none; border-right: 4px solid #333; }
.right { border: 4px solid transparent; border-right: none; border-left: 4px solid #333; }
.v-thumb {
  height: 171px;
  flex-shrink: 0;
  background: #fff;
  border: 1px solid #9e9e9e;
  border-top: none;
  box-sizing: border-box;
}
.v-rest { flex: 1; }
.sheetbar {
  height: 28px;
  flex-shrink: 0;
  display: flex;
  align-items: center;
  box-sizing: border-box;
  border-top: 1px solid #9e9e9e;
}
.sheet-tab {
  width: 68px;
  height: 7px;
  margin: 20px 0 0 100px;
  box-sizing: border-box;
  background: #fff;
  border: 1px solid #217346;
  border-top: none;
  border-bottom-width: 2px;
}
.add-sheet {
  width: 16px;
  height: 16px;
  margin-left: 32px;
  box-sizing: border-box;
  border: 1px solid #888;
  border-radius: 50%;
  flex-shrink: 0;
}
.hsdots {
  margin-left: 552px;
  width: 17px;
  display: flex;
  flex-direction: column;
  gap: 2px;
  align-items: flex-start;
}
.hscroll {
  width: 473px;
  height: 14px;
  display: flex;
}
.sb-btn.h { width: 14px; }
.h-thumb {
  width: 412px;
  background: #fff;
  border: 1px solid #9e9e9e;
  border-left-width: 2px;
  box-sizing: border-box;
}
.h-rest { flex: 1; }

/* ---- status bar ---- */
.status {
  height: 22px;
  flex-shrink: 0;
  box-sizing: border-box;
  background: #f3f3f3;
  border-top: 1px solid #d2d2d2;
  display: flex;
  align-items: center;
  font-size: 11.500px;
  color: #444;
}
.ready { margin-left: 7px; width: 51px; }
.macro { flex-shrink: 0; }
.a11y { margin-left: 17px; flex-shrink: 0; }
.a11y-text { margin-left: 2px; width: 726px; white-space: nowrap; }
.viewbtns { display: flex; height: 100%; margin-left: 145px; }
.vbtn {
  width: 40px;
  display: flex;
  align-items: center;
  justify-content: center;
}
.vbtn.on { background: #c6c6c6; }
.zoomer {
  display: flex;
  align-items: center;
  margin-left: 8px;
}
.z-minus { width: 8px; height: 1px; background: #444; }
.z-track {
  margin: 0 5px 0 4px;
  width: 100px;
  height: 1px;
  background: #555;
  position: relative;
}
.z-track i {
  position: absolute;
  left: 48px;
  top: -5px;
  width: 4px;
  height: 11px;
  background: #444;
}
.z-plus {
  width: 9px;
  height: 9px;
  background:
    linear-gradient(#444, #444) center / 9px 1px no-repeat,
    linear-gradient(#444, #444) center / 1px 9px no-repeat;
}
.zoom-val { margin-left: 12px; font-size: 11px; }

/* ---- taskbar ---- */
.taskbar {
  height: 40px;
  flex-shrink: 0;
  background: #04121f;
  display: flex;
  align-items: stretch;
  color: #fff;
}
.start {
  width: 48px;
  display: flex;
  align-items: center;
  justify-content: center;
  padding-right: 2px;
  box-sizing: border-box;
}
.search {
  width: 288px;
  box-sizing: border-box;
  background: #f3f3f3;
  border-top: 1px solid #c8c8c8;
  display: flex;
  align-items: center;
  padding-left: 9px;
  color: #333;
  font-size: 14.200px;
  letter-spacing: -0.1px;
  position: relative;
  overflow: hidden;
}
.search span { margin-left: 14px; }
.flowers { position: absolute; right: 0; bottom: 0; }
.tb-app {
  width: 48px;
  display: flex;
  align-items: center;
  justify-content: center;
  box-sizing: border-box;
}
.edge { margin-left: 3px; }
.firefox { margin-left: 2px; width: 47px; }
.lit { background: #1a2935; }
.excel-app { width: 48px; margin-left: 1px; }
.active { border-bottom: 2px solid #76b9ed; }
.tray {
  margin-left: 492px;
  width: 82px;
  display: flex;
  align-items: center;
  gap: 11.500px;
  flex-shrink: 0;
}
.tray svg { flex-shrink: 0; }
.t-net, .t-vol { margin-left: -1.500px; }
.clock {
  width: 78px;
  margin-left: 1px;
  display: flex;
  flex-direction: column;
  align-items: center;
  justify-content: center;
  font-size: 12px;
  line-height: 18px;
  letter-spacing: 0;
  flex-shrink: 0;
}
.notif { align-self: center; margin-left: 4px; }

/* ---- overlays ---- */
.callout {
  position: absolute;
  left: 14px;
  top: 467px;
  width: 285px;
  height: 182px;
  box-sizing: border-box;
  background: #217346;
  border-top: 1px solid #e8f0ea;
  border-right: 1px solid #e8f0ea;
  color: #fff;
  padding: 12px 12px;
  font-size: 12px;
  line-height: 16px;
  letter-spacing: -0.33px;
}
.callout h3 {
  margin: 0 0 19px;
  font-size: 15px;
  font-weight: 600;
  line-height: 20px;
  letter-spacing: -0.35px;
}
.callout p { margin: 0 0 16px; max-width: 258px; }
.gotit {
  position: absolute;
  right: 12px;
  bottom: 12px;
  width: 47px;
  height: 24px;
  padding: 0;
  background: transparent;
  border: 1px solid #fff;
  color: #fff;
  font: inherit;
}
.pointer {
  position: absolute;
  left: 138px;
  top: 181px;
  width: 0;
  height: 0;
  border-left: 8px solid transparent;
  border-right: 8px solid transparent;
  border-top: 8px solid #217346;
}
.tb-tip {
  position: absolute;
  left: 485px;
  top: 660px;
  width: 49px;
  height: 20px;
  box-sizing: border-box;
  background: #f8f8f8;
  border: 1px solid #777;
  color: #555;
  font-size: 11.500px;
  line-height: 18px;
  text-align: center;
}
.watermark {
  position: absolute;
  left: 1040px;
  top: 606px;
  display: flex;
  align-items: center;
  gap: 2px;
  opacity: 0.25;
  font: 300 46px "Liberation Sans", sans-serif;
  letter-spacing: 0;
  color: transparent;
  -webkit-text-stroke: 1px #777;
  transform: scaleX(0.68);
  transform-origin: left center;
  pointer-events: none;
}
</style>
